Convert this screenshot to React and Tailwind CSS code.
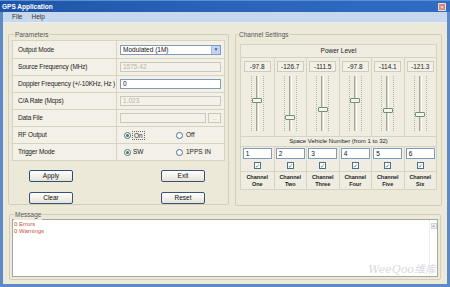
import React from "react";

const rows = [
    { label: "Output Mode", kind: "select", value: "Modulated (1M)" },
    { label: "Source Frequency (MHz)", kind: "disabled", value: "1575.42" },
    { label: "Doppler Frequency (+/-10KHz, Hz )", kind: "input", value: "0" },
    { label: "C/A Rate (Mcps)", kind: "disabled", value: "1.023" },
    { label: "Data File", kind: "file", value: "" },
    { label: "RF Output", kind: "radio", a: "On", b: "Off", focus: true },
    { label: "Trigger Mode", kind: "radio", a: "SW", b: "1PPS IN" },
];

const channels = [
    { power: "-97.8", thumb: 29, sv: "1", name: "One" },
    { power: "-126.7", thumb: 46, sv: "2", name: "Two" },
    { power: "-111.5", thumb: 38, sv: "3", name: "Three" },
    { power: "-97.8", thumb: 29, sv: "4", name: "Four" },
    { power: "-114.1", thumb: 39, sv: "5", name: "Five" },
    { power: "-121.3", thumb: 43, sv: "6", name: "Six" },
];

function Radio({ checked }) {
    return (
        <span className="w-[7px] h-[7px] rounded-full border border-[#4a6f93] bg-white flex items-center justify-center shrink-0">
            {checked && <span className="w-[3px] h-[3px] rounded-full bg-[#2d8a2d]" />}
        </span>
    );
}

function Value({ row }) {
    if (row.kind === "select") {
        return (
            <div className="w-[101px] h-[10px] bg-white border border-[#7f9db9] flex items-center justify-between">
                <span className="pl-[2px] text-[#111]">{row.value}</span>
                <span className="w-[9px] h-full bg-[#c3d3f3] border-l border-[#a8bde6] flex items-center justify-center text-[#4d6185] text-[5px]">▼</span>
            </div>
        );
    }
    if (row.kind === "disabled") {
        return (
            <div className="w-[101px] h-[10px] bg-[#f2f1ea] border border-[#cbc8b9] flex items-center pl-[2px] text-[#b9b6a8]">
                {row.value}
            </div>
        );
    }
    if (row.kind === "input") {
        return (
            <div className="w-[101px] h-[10px] bg-white border border-[#7f9db9] flex items-center pl-[2px] text-[#111]">
                {row.value}
            </div>
        );
    }
    if (row.kind === "file") {
        return (
            <div className="w-[101px] h-[10px] flex gap-[2px]">
                <div className="flex-1 bg-[#f2f1ea] border border-[#cbc8b9]" />
                <div className="w-[13px] bg-[#f2f1ea] border border-[#cbc8b9] text-[#aaa] text-[5px] flex items-end justify-center">...</div>
            </div>
        );
    }
    return (
        <div className="flex items-center w-full pl-[4px]">
            <div className="flex items-center gap-[2px] w-[52px]">
                <Radio checked />
                <span className={row.focus ? "outline outline-1 outline-dotted outline-[#666] px-[1px] leading-[7px]" : ""}>{row.a}</span>
            </div>
            <div className="flex items-center gap-[3px]">
                <Radio />
                <span>{row.b}</span>
            </div>
        </div>
    );
}

function Button({ label, focus }) {
    return (
        <div className={`w-[44px] h-[12px] rounded-[2px] bg-gradient-to-b from-white to-[#e6e3d6] flex items-center justify-center text-[#111] ${focus ? "border-[1.5px] border-[#2f4f7f]" : "border border-[#3b5277]"}`}>
            {label}
        </div>
    );
}

function Slider({ top }) {
    return (
        <div className="relative h-[64px] w-full flex justify-center">
            <div className="mt-[4px] h-[55px] flex gap-[4px]">
                <div className="w-px h-full border-l border-dotted border-[#b7b4a4]" />
                <div className="w-[3px] h-full bg-[#d9d6c8] border-l border-[#a7a495] border-r border-r-white" />
                <div className="w-px h-full border-l border-dotted border-[#b7b4a4]" />
            </div>
            <div
                className="absolute left-1/2 -translate-x-1/2 w-[10px] h-[5px] bg-[#f4f6ee] border border-[#6f8f78] rounded-[1px]"
                style={{ top: top - 3 }}
            />
        </div>
    );
}

export default function App() {
    return (
        <div className="w-[450px] h-[287px] bg-[#5d89c7] flex flex-col font-['Liberation_Sans',Arial,sans-serif] text-[6.5px] text-[#222] overflow-hidden">
            {/* title bar */}
            <div className="h-[12px] bg-gradient-to-r from-[#1e55a6] via-[#2a64b8] to-[#2f6cc2] flex items-center justify-between px-[2px] border-t border-[#5b8fd6]">
                <span className="text-white font-bold text-[6.5px]">GPS Application</span>
                <span className="w-[8px] h-[8px] rounded-[1px] bg-[#d88577] border border-white/70 text-white text-[6px] leading-none flex items-center justify-center mr-[2px]">×</span>
            </div>
            {/* menu */}
            <div className="h-[11px] mx-[3px] bg-[#c7d8ee] flex items-center gap-[9px] pl-[9px] text-[#333] border-b border-[#e7eef8]">
                <span>File</span>
                <span>Help</span>
            </div>
            {/* body */}
            <div className="flex-1 mx-[3px] mb-[3px] bg-[#ece9d8] flex flex-col pt-[11px] px-[5px] relative">
                <div className="flex gap-[6px]">
                    {/* Parameters */}
                    <div className="relative w-[221px] h-[171px] border border-[#d1cebd] rounded-[2px] px-[3px] pt-[5px]">
                        <span className="absolute -top-[5px] left-[5px] px-[1px] bg-[#ece9d8] text-[#555]">Parameters</span>
                        <div className="w-[213px] border border-[#d6d3c3] bg-[#f3f1e7]">
                            {rows.map((row, i) => (
                                <div key={i} className={`grid grid-cols-[104px_109px] h-[17px] ${i > 0 ? "border-t border-[#d6d3c3]" : ""}`}>
                                    <div className="flex items-center pl-[5px] border-r border-[#d6d3c3] whitespace-nowrap tracking-[-0.15px] overflow-hidden">{row.label}</div>
                                    <div className="flex items-center pl-[3px]"><Value row={row} /></div>
                                </div>
                            ))}
                        </div>
                        <div className="flex flex-col gap-[10px] mt-[9px] pl-[17px]">
                            <div className="flex gap-[88px]">
                                <Button label="Apply" focus />
                                <Button label="Exit" />
                            </div>
                            <div className="flex gap-[88px]">
                                <Button label="Clear" />
                                <Button label="Reset" />
                            </div>
                        </div>
                    </div>
                    {/* Channel Settings */}
                    <div className="relative w-[207px] h-[172px] border border-[#d1cebd] rounded-[2px] px-[4px] pt-[9px]">
                        <span className="absolute -top-[5px] left-[2px] px-[1px] bg-[#ece9d8] text-[#555]">Channel Settings</span>
                        <div className="w-[197px] border border-[#d6d3c3] bg-[#efede2]">
                            <div className="h-[13px] flex items-center justify-center border-b border-[#d6d3c3]">Power Level</div>
                            <div className="grid grid-cols-6">
                                {channels.map((c, i) => (
                                    <div key={i} className={`flex flex-col items-center ${i > 0 ? "border-l border-[#d6d3c3]" : ""}`}>
                                        <div className="mt-[3px] w-[27px] h-[11px] border border-[#cfccbc] bg-[#f3f1e7] flex items-center justify-center">{c.power}</div>
                                        <Slider top={c.thumb} />
                                    </div>
                                ))}
                            </div>
                            <div className="h-[11px] flex items-center justify-center border-y border-[#d6d3c3] text-[6px]">Space Vehicle Number (from 1 to 32)</div>
                            <div className="grid grid-cols-6">
                                {channels.map((c, i) => (
                                    <div key={i} className={`flex flex-col items-center ${i > 0 ? "border-l border-[#d6d3c3]" : ""}`}>
                                        <div className="mt-[1px] w-[29px] h-[11px] bg-white border border-[#7f9db9] flex items-center pl-[2px] text-[#111]">{c.sv}</div>
                                        <div className="mt-[3px] w-[7px] h-[7px] border border-[#4a6f93] bg-white flex items-center justify-center text-[#2d8a2d] text-[6px] leading-none">✓</div>
                                        <div className="mt-[2px] w-full border-t border-[#d6d3c3] h-[18px] flex flex-col items-center justify-center font-bold text-[5.5px] leading-[6.5px] text-[#222]">
                                            <span>Channel</span>
                                            <span>{c.name}</span>
                                        </div>
                                    </div>
                                ))}
                            </div>
                        </div>
                    </div>
                </div>
                {/* Message */}
                <div className="relative mt-[8px] mx-[1px] w-[432px] h-[66px] border border-[#d1cebd] rounded-[2px] px-[2px] pt-[4px] pb-[2px]">
                    <span className="absolute -top-[5px] left-[4px] px-[1px] bg-[#ece9d8] text-[#555]">Message</span>
                    <div className="h-full bg-white border border-[#a9a89c] flex">
                        <div className="flex-1 pl-[1px] pt-[1px] text-[#c8503c] text-[6px] leading-[7px]">
                            <div>0 Errors</div>
                            <div>0 Warnings</div>
                        </div>
                        <div className="w-[8px] flex flex-col items-center border-l border-[#eeeeee]">
                            <span className="mt-[3px] w-[6px] h-[6px] bg-[#eef0f4] border border-[#cfd5e0] text-[#9aa] text-[4px] leading-none flex items-center justify-center">▲</span>
                        </div>
                    </div>
                    <span className="absolute right-[4px] bottom-[1px] italic text-[11px] text-[#d8dae2] font-['DejaVu_Serif','Noto_Sans_CJK_SC',serif]">WeeQoo维库</span>
                </div>
            </div>
        </div>
    );
}
